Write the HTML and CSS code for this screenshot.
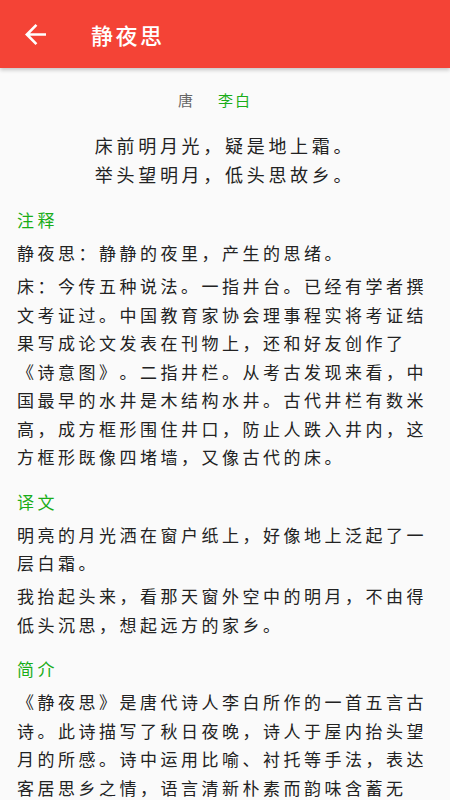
FILE: index.html
```html
<!DOCTYPE html>
<html lang="zh-CN">
<head>
<meta charset="utf-8">
<title>静夜思</title>
<link rel="stylesheet" href="styles.css">
</head>
<body>
<header class="appbar">
  <svg class="back" viewBox="4 4 16 16" width="21" height="21" aria-hidden="true">
    <path d="M20 11H7.83l5.59-5.59L12 4l-8 8 8 8 1.41-1.41L7.83 13H20v-2z" fill="#fff"/>
  </svg>
  <h1 class="title">静夜思</h1>
</header>
<main class="content">
  <div class="meta">
    <span class="dynasty">唐</span>
    <span class="author">李白</span>
  </div>
  <div class="poem">
    <p>床前明月光，疑是地上霜。</p>
    <p>举头望明月，低头思故乡。</p>
  </div>
  <section class="section">
    <h2 class="heading">注释</h2>
    <p class="para">静夜思：静静的夜里，产生的思绪。</p>
    <p class="para">床：今传五种说法。一指井台。已经有学者撰文考证过。中国教育家协会理事程实将考证结果写成论文发表在刊物上，还和好友创作了《诗意图》。二指井栏。从考古发现来看，中国最早的水井是木结构水井。古代井栏有数米高，成方框形围住井口，防止人跌入井内，这方框形既像四堵墙，又像古代的床。</p>
  </section>
  <section class="section">
    <h2 class="heading">译文</h2>
    <p class="para">明亮的月光洒在窗户纸上，好像地上泛起了一层白霜。</p>
    <p class="para">我抬起头来，看那天窗外空中的明月，不由得低头沉思，想起远方的家乡。</p>
  </section>
  <section class="section">
    <h2 class="heading">简介</h2>
    <p class="para">《静夜思》是唐代诗人李白所作的一首五言古诗。此诗描写了秋日夜晚，诗人于屋内抬头望月的所感。诗中运用比喻、衬托等手法，表达客居思乡之情，语言清新朴素而韵味含蓄无穷，历来广为传诵。</p>
  </section>
</main>
</body>
</html>
```
FILE: styles.css
```css
* { box-sizing: border-box; }
html, body {
  margin: 0;
  padding: 0;
  background: #fafafa;
  font-family: "Noto Sans CJK SC", "Noto Sans", sans-serif;
  color: #222;
  text-spacing-trim: space-all;
}
body { height: 800px; overflow: hidden; }

.appbar {
  height: 68px;
  background: #f44336;
  display: flex;
  align-items: center;
  padding-left: 25px;
  box-shadow: 0 2px 4px rgba(0, 0, 0, 0.22);
  position: relative;
  z-index: 1;
}
.back { display: block; flex: none; }
.title {
  margin: 0 0 0 45px;
  font-size: 22px;
  font-weight: 500;
  letter-spacing: 2.5px;
  color: #fff;
  line-height: 30px;
}

.content { padding: 0 17px; }

.meta {
  margin-top: 18px;
  display: flex;
  justify-content: center;
  gap: 23px;
  padding-right: 20px;
  font-size: 15px;
  line-height: 28px;
  letter-spacing: 2px;
}
.dynasty { color: #666; }
.author { color: #1aad19; }

.poem {
  margin-top: 17px;
  text-align: center;
  font-size: 18px;
  line-height: 28.5px;
  letter-spacing: 3.7px;
}
.poem p { margin: 0; }

.section { margin-top: 18px; }
.section + .section { margin-top: 16px; }
.heading {
  margin: 0;
  font-size: 17px;
  font-weight: 400;
  line-height: 28.5px;
  letter-spacing: 3.5px;
  color: #1aad19;
}
.para {
  margin: 4.5px 0 0;
  font-size: 17px;
  line-height: 28.5px;
  letter-spacing: 3.5px;
}
```
